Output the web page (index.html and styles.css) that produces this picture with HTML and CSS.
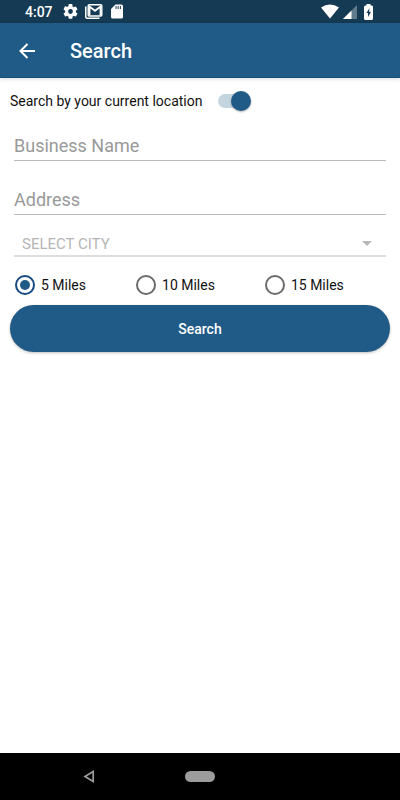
FILE: index.html
```html
<!DOCTYPE html>
<html lang="en">
<head>
    <meta charset="UTF-8">
    <meta name="viewport" content="width=device-width, initial-scale=1.0">
    <title>Search</title>
    <link rel="stylesheet" href="styles.css">
</head>
<body>
    <div class="status-bar">
        <span class="time">4:07</span>
        <svg class="icon-settings" width="15" height="15" viewBox="2 2 20 20" fill="#fff"><path d="M19.14 12.94c.04-.3.06-.61.06-.94s-.02-.64-.07-.94l2.03-1.58a.49.49 0 0 0 .12-.61l-1.92-3.32a.49.49 0 0 0-.59-.22l-2.39.96a7 7 0 0 0-1.62-.94l-.36-2.54A.48.48 0 0 0 13.92 2h-3.84a.48.48 0 0 0-.48.41l-.36 2.54a7.3 7.3 0 0 0-1.62.94l-2.39-.96a.48.48 0 0 0-.59.22L2.73 8.87a.48.48 0 0 0 .12.61l2.03 1.58a6 6 0 0 0 0 1.88l-2.03 1.58a.49.49 0 0 0-.12.61l1.92 3.32c.12.22.37.29.59.22l2.39-.96c.5.38 1.03.7 1.62.94l.36 2.54c.05.24.24.41.48.41h3.84c.24 0 .44-.17.47-.41l.36-2.54a7 7 0 0 0 1.62-.94l2.39.96c.22.08.47 0 .59-.22l1.92-3.32a.48.48 0 0 0-.12-.61zM12 15.2a3.2 3.2 0 1 1 0-6.4 3.2 3.2 0 0 1 0 6.4z"/></svg>
        <svg class="icon-mail" width="18" height="15" viewBox="0 0 18 15"><path d="M.75 2.500v10.250q0 1.500 1.500 1.500H14.500" fill="none" stroke="#fff" stroke-width="1.500"/><rect x="3.200" y=".7" width="13.600" height="11.300" rx="1" fill="none" stroke="#fff" stroke-width="1.400"/><path d="M4.500 11.500V2.500L10 6.800L15.500 2.500v9" fill="none" stroke="#fff" stroke-width="1.800"/></svg>
        <svg class="icon-sd" width="12" height="15" viewBox="0 0 12 15"><path d="M4.500.5H10.500Q12 .5 12 2v11q0 1.500-1.500 1.500h-9Q0 14.500 0 13V5z" fill="#fff"/><path d="M5 2v3M7.200 2v3M9.400 2v3" stroke="#153a54"/></svg>
        <div class="status-right">
            <svg width="18" height="15" viewBox="0 0 18 15"><path d="M0 3.500Q9-2.500 18 3.500L9 14.500z" fill="#fff"/></svg>
            <svg width="14" height="14" viewBox="0 0 14 14"><path d="M0 14L14 0V14z" fill="#5f7b8c"/><path d="M0 14L8.500 5.500V14z" fill="#fff"/></svg>
            <svg class="icon-battery" width="9" height="16" viewBox="0 0 9 16"><path d="M2.500 0h4v1.500H8Q9 1.500 9 3v11.500Q9 16 7.500 16h-6Q0 16 0 14.500V3q0-1.500 1.500-1.500h1z" fill="#fff"/><path d="M5.500 4L2.500 9H4V13L7 7.800H5z" fill="#153a54"/></svg>
        </div>
    </div>

    <header class="app-bar">
        <button type="button" class="back" aria-label="Back">
            <svg width="16" height="16" viewBox="0 0 16 16"><path d="M8.500 1L1.500 8L8.500 15M1.500 8H16" fill="none" stroke="#fff" stroke-width="2"/></svg>
        </button>
        <h1>Search</h1>
    </header>

    <main>
        <form class="search-form">
            <label class="location">
                Search by your current location
                <input type="checkbox" class="switch" checked>
            </label>

            <div class="fields">
                <input type="text" class="field" placeholder="Business Name" aria-label="Business Name">
                <input type="text" class="field" placeholder="Address" aria-label="Address">
                <div class="select-wrap">
                    <select class="city" aria-label="City">
                        <option>SELECT CITY</option>
                    </select>
                </div>
            </div>

            <div class="distance">
                <label><input type="radio" name="miles" value="5" checked>5 Miles</label>
                <label><input type="radio" name="miles" value="10">10 Miles</label>
                <label><input type="radio" name="miles" value="15">15 Miles</label>
            </div>

            <button type="submit" class="submit">Search</button>
        </form>
    </main>

    <nav class="nav-bar">
        <button type="button" class="nav-back" aria-label="System back">
            <svg width="12" height="13" viewBox="0 0 12 13"><path d="M10.200 1.500V11.500L2 6.500z" fill="none" stroke="#9c9c9c" stroke-width="1.700"/></svg>
        </button>
        <button type="button" class="nav-home" aria-label="Home"></button>
    </nav>
</body>
</html>
```
FILE: styles.css
```css
* {
    margin: 0;
    padding: 0;
    box-sizing: border-box;
}

body {
    font-family: Roboto, "Liberation Sans", sans-serif;
    font-size: 14px;
    min-height: 100vh;
    background: #fff;
    color: #111;
    display: flex;
    flex-direction: column;
}

button {
    border: none;
    background: none;
    font-family: inherit;
    cursor: pointer;
}

svg {
    display: block;
}

.status-bar {
    display: flex;
    align-items: center;
    height: 23px;
    padding: 0 27px 0 25px;
    background: #153a54;
    color: #fff;
}

.time {
    font-weight: 500;
    margin-right: 10px;
}

.icon-mail {
    margin: 0 8px 0 7px;
}

.status-right {
    display: flex;
    align-items: center;
    gap: 4px;
    margin-left: auto;
}

.icon-battery {
    margin-left: 3px;
}

.app-bar {
    display: flex;
    align-items: center;
    height: 55px;
    padding: 2px 0 0 19px;
    background: #205b87;
    border-bottom: 1px solid #14507d;
    color: #fff;
    box-shadow: 0 1px 4px rgba(0, 0, 0, 0.15);
}

.back {
    margin-right: 35px;
}

h1 {
    font-size: 20px;
    font-weight: 500;
}

main {
    flex: 1;
}

.search-form {
    padding: 12px 10px;
}

.location {
    display: flex;
    align-items: center;
    gap: 16px;
    height: 22px;
}

.switch {
    appearance: none;
    position: relative;
    width: 32px;
    height: 14px;
    border-radius: 7px;
    background: #ccc;
}

.switch::before {
    content: '';
    position: absolute;
    left: 0;
    top: -3px;
    width: 20px;
    height: 20px;
    border-radius: 50%;
    background: #fafafa;
    box-shadow: 0 1px 2px rgba(0, 0, 0, 0.3);
}

.switch:checked {
    background: #c5d5e0;
}

.switch:checked::before {
    left: 13px;
    background: #205b87;
}

.fields {
    padding: 0 4px;
}

.field {
    display: block;
    width: 100%;
    height: 30px;
    margin-top: 24px;
    border: none;
    border-bottom: 1px solid #bbb;
    background: none;
    font-family: inherit;
    font-size: 18px;
    outline: none;
}

.field:first-child {
    margin-top: 19px;
}

.field::placeholder {
    color: #999;
}

.select-wrap {
    position: relative;
    margin-top: 14px;
    border-bottom: 2px solid #ddd;
}

.select-wrap::after {
    content: '';
    position: absolute;
    right: 14px;
    top: 12px;
    border: 5px solid transparent;
    border-top-color: #b8b8b8;
    border-bottom: none;
    pointer-events: none;
}

.city {
    display: block;
    appearance: none;
    width: 100%;
    height: 26px;
    padding: 3px 8px 0;
    border: none;
    background: none;
    font-family: inherit;
    font-size: 15px;
    color: #b5b5b5;
}

.distance {
    display: flex;
    gap: 50px;
    padding: 18px 5px 10px;
}

.distance label {
    display: flex;
    align-items: center;
    gap: 6px;
}

.distance input {
    appearance: none;
    width: 20px;
    height: 20px;
    border: 2px solid #6b6b6b;
    border-radius: 50%;
}

.distance input:checked {
    border-color: #164a80;
    padding: 3px;
    background: #205b87 content-box;
}

.submit {
    display: block;
    width: 100%;
    height: 47px;
    border-radius: 24px;
    background: #205b87;
    color: #fff;
    font-size: 14px;
    font-weight: 500;
    box-shadow: 0 1px 3px rgba(0, 0, 0, 0.25);
}

.nav-bar {
    display: flex;
    align-items: center;
    justify-content: center;
    gap: 90px;
    height: 47px;
    padding-right: 102px;
    background: #000;
}

.nav-home {
    width: 30px;
    height: 11px;
    border-radius: 6px;
    background: #9c9c9c;
}
```
